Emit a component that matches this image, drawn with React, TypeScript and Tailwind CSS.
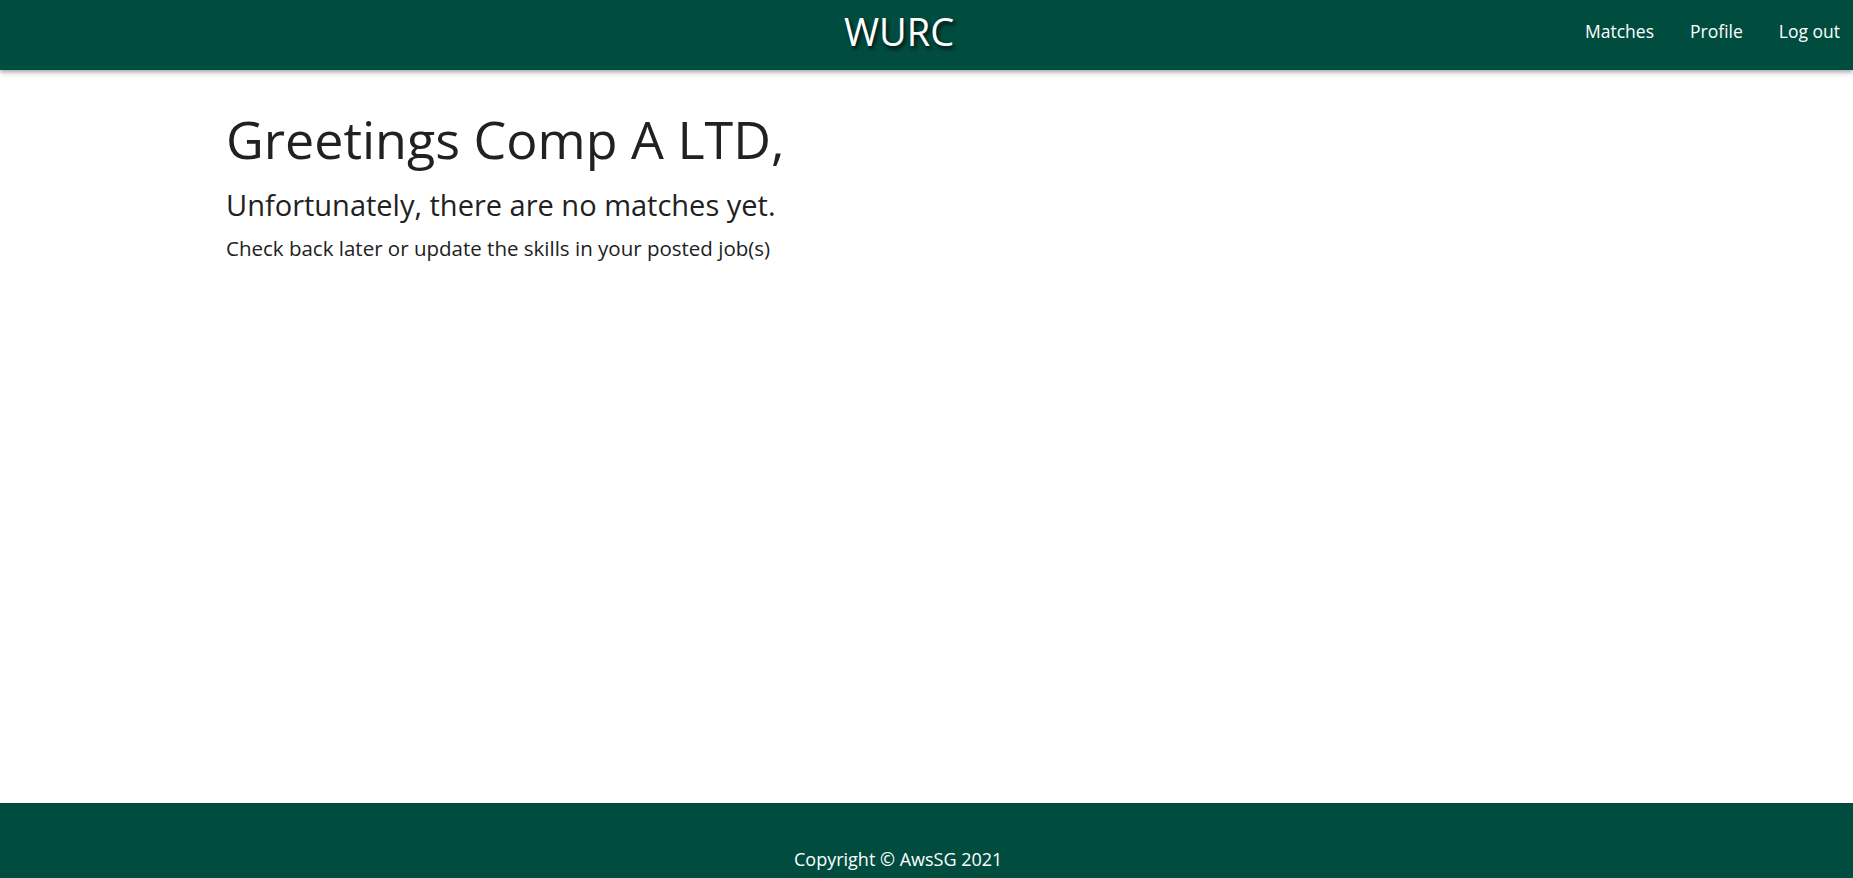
import React from "react";

const navLinks = ["Matches", "Profile", "Log out"];

const App: React.FC = () => {
  return (
    <div className="min-h-screen bg-white font-['Open_Sans',sans-serif] text-[#212121]">
      {/* Top nav */}
      <header className="relative z-10 h-[70px] bg-[#004d40] shadow-[0_2px_4px_rgba(0,0,0,0.25),0_3px_6px_rgba(0,0,0,0.12)]">
        <div className="relative h-full">
          <a className="absolute left-[899px] top-0 -translate-x-1/2 text-[38px] leading-[62px] text-white [text-shadow:2px_3px_4px_rgba(0,0,0,0.8)]">
            WURC
          </a>
          <ul className="absolute right-0 top-0 flex gap-[36px] pr-[13px]">
            {navLinks.map((link) => (
              <li key={link}>
                <a className="block text-[17.5px] leading-[62px] text-white">{link}</a>
              </li>
            ))}
          </ul>
        </div>
      </header>

      {/* Main content */}
      <main className="h-[733px] pl-[226px] pt-[38px]">
        <h3 className="text-[52px] leading-[1.2]">Greetings Comp A LTD,</h3>
        <h5 className="mt-[16px] text-[29px] leading-[1.3]">Unfortunately, there are no matches yet.</h5>
        <p className="mt-[10px] text-[20.5px] leading-[1.4]">Check back later or update the skills in your posted job(s)</p>
      </main>

      {/* Footer */}
      <footer className="h-[120px] bg-[#004d40] pt-[43px]">
        <p className="pl-[794px] text-[18px] text-white">Copyright © AwsSG 2021</p>
      </footer>
    </div>
  );
};

export default App;
